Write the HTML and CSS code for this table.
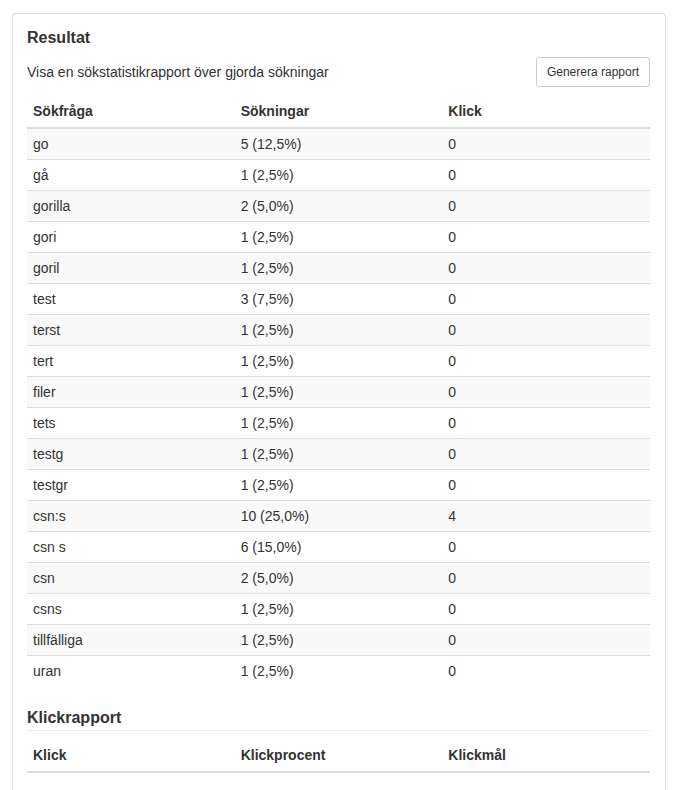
FILE: index.html
```html
<!DOCTYPE html>
<html lang="sv">
<head>
<meta charset="utf-8">
<title>Resultat</title>
<link rel="stylesheet" href="styles.css">
</head>
<body>
<div class="panel">
  <h3 class="title">Resultat</h3>
  <div class="toolbar">
    <span class="desc">Visa en sökstatistikrapport över gjorda sökningar</span>
    <button class="btn" type="button">Generera rapport</button>
  </div>
  <table class="table striped">
    <thead>
      <tr><th>Sökfråga</th><th>Sökningar</th><th>Klick</th></tr>
    </thead>
    <tbody>
      <tr><td>go</td><td>5 (12,5%)</td><td>0</td></tr>
      <tr><td>gå</td><td>1 (2,5%)</td><td>0</td></tr>
      <tr><td>gorilla</td><td>2 (5,0%)</td><td>0</td></tr>
      <tr><td>gori</td><td>1 (2,5%)</td><td>0</td></tr>
      <tr><td>goril</td><td>1 (2,5%)</td><td>0</td></tr>
      <tr><td>test</td><td>3 (7,5%)</td><td>0</td></tr>
      <tr><td>terst</td><td>1 (2,5%)</td><td>0</td></tr>
      <tr><td>tert</td><td>1 (2,5%)</td><td>0</td></tr>
      <tr><td>filer</td><td>1 (2,5%)</td><td>0</td></tr>
      <tr><td>tets</td><td>1 (2,5%)</td><td>0</td></tr>
      <tr><td>testg</td><td>1 (2,5%)</td><td>0</td></tr>
      <tr><td>testgr</td><td>1 (2,5%)</td><td>0</td></tr>
      <tr><td>csn:s</td><td>10 (25,0%)</td><td>4</td></tr>
      <tr><td>csn s</td><td>6 (15,0%)</td><td>0</td></tr>
      <tr><td>csn</td><td>2 (5,0%)</td><td>0</td></tr>
      <tr><td>csns</td><td>1 (2,5%)</td><td>0</td></tr>
      <tr><td>tillfälliga</td><td>1 (2,5%)</td><td>0</td></tr>
      <tr><td>uran</td><td>1 (2,5%)</td><td>0</td></tr>
    </tbody>
  </table>
  <h4 class="subtitle">Klickrapport</h4>
  <table class="table second">
    <thead>
      <tr><th>Klick</th><th>Klickprocent</th><th>Klickmål</th></tr>
    </thead>
    <tbody></tbody>
  </table>
</div>
</body>
</html>
```
FILE: styles.css
```css
html, body {
  margin: 0;
  padding: 0;
  background: #fff;
}
body {
  font-family: "Liberation Sans", Arial, sans-serif;
  font-size: 14px;
  line-height: 20px;
  color: #333;
}
.panel {
  box-sizing: border-box;
  width: 654px;
  margin: 13px 0 0 12px;
  padding: 14px 15px 40px 14px;
  border: 1px solid #ddd;
  border-bottom: none;
  border-radius: 4px 4px 0 0;
  height: 800px;
}
.title {
  margin: 0;
  font-size: 16px;
  line-height: 20px;
  font-weight: bold;
}
.toolbar {
  display: flex;
  justify-content: space-between;
  align-items: center;
  margin-top: 9px;
}
.desc {
  font-size: 14px;
}
.btn {
  font-family: "Liberation Sans", Arial, sans-serif;
  font-size: 12px;
  line-height: 18px;
  color: #333;
  background: #fff;
  border: 1px solid #ccc;
  border-radius: 3px;
  padding: 5px 10px;
  height: 30px;
}
.table {
  width: 100%;
  border-collapse: separate;
  border-spacing: 0;
  table-layout: fixed;
  margin-top: 6px;
}
.table th {
  text-align: left;
  font-weight: bold;
  padding: 8px 6px 6px;
  border-bottom: 2px solid #ddd;
}
.table td {
  padding: 5px 6px;
  border-top: 1px solid #ddd;
}
.table tbody tr:first-child td {
  border-top: none;
}
.striped tbody tr:nth-child(odd) td {
  background: #f9f9f9;
}
.subtitle {
  margin: 22px 0 0;
  font-size: 16px;
  line-height: 20px;
  font-weight: bold;
  padding-bottom: 2px;
  border-bottom: 1px solid #eee;
}
.second {
  margin-top: 6px;
}
```
